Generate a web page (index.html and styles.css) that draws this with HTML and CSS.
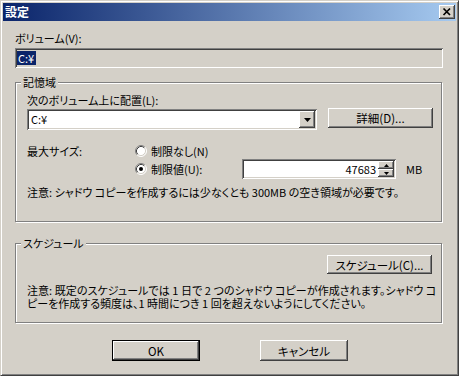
FILE: index.html
```html
<!DOCTYPE html>
<html lang="ja">
<head>
    <meta charset="UTF-8">
    <title>設定</title>
    <link rel="stylesheet" href="styles.css">
</head>
<body>

<div class="window">
    <div class="titlebar">
        <span class="title">設定</span>
        <button class="close raised" type="button">
            <svg width="16" height="14" viewBox="0 0 16 14">
                <path d="M4.5 3.5 L11 10 M11 3.5 L4.5 10" stroke="#000" stroke-width="1.7" fill="none"/>
            </svg>
        </button>
    </div>

    <div class="content">
        <div class="text volume-label">ボリューム(V):</div>
        <div class="field volume sunken"><span class="sel">C:¥</span></div>

        <!-- Storage area -->
        <div class="group storage">
            <span class="legend">記憶域</span>
            <div class="text">次のボリューム上に配置(L):</div>
            <div class="combo-row">
                <div class="combo sunken">
                    <span class="combo-value">C:¥</span>
                    <span class="drop raised">
                        <svg width="7" height="4" viewBox="0 0 7 4"><polygon points="0,0 7,0 3.5,4" fill="#000"/></svg>
                    </span>
                </div>
                <button class="btn raised details" type="button">詳細(D)...</button>
            </div>

            <div class="size">
                <div class="size-label">最大サイズ:</div>
                <div class="size-options">
                    <div class="radio-row">
                        <svg class="radio" width="12" height="12" viewBox="0 0 12 12">
                            <circle cx="6" cy="6" r="5" fill="#fff"/>
                            <path d="M2.11 9.89 A5.5 5.5 0 0 1 9.89 2.11" stroke="#808080" fill="none"/>
                            <path d="M9.89 2.11 A5.5 5.5 0 0 1 2.11 9.89" stroke="#fff" fill="none"/>
                            <path d="M2.82 9.18 A4.5 4.5 0 0 1 9.18 2.82" stroke="#404040" fill="none"/>
                            <path d="M9.18 2.82 A4.5 4.5 0 0 1 2.82 9.18" stroke="#d4d0c8" fill="none"/>
                        </svg>
                        <span>制限なし(N)</span>
                    </div>
                    <div class="radio-row limit">
                        <div class="radio-item">
                            <svg class="radio" width="12" height="12" viewBox="0 0 12 12">
                                <circle cx="6" cy="6" r="5" fill="#fff"/>
                                <path d="M2.11 9.89 A5.5 5.5 0 0 1 9.89 2.11" stroke="#808080" fill="none"/>
                                <path d="M9.89 2.11 A5.5 5.5 0 0 1 2.11 9.89" stroke="#fff" fill="none"/>
                                <path d="M2.82 9.18 A4.5 4.5 0 0 1 9.18 2.82" stroke="#404040" fill="none"/>
                                <path d="M9.18 2.82 A4.5 4.5 0 0 1 2.82 9.18" stroke="#d4d0c8" fill="none"/>
                                <circle cx="6" cy="6" r="2" fill="#000"/>
                            </svg>
                            <span>制限値(U):</span>
                        </div>
                        <div class="spin sunken">
                            <span class="spin-value">47683</span>
                            <div class="spin-buttons">
                                <span class="spin-btn raised">
                                    <svg width="5" height="3" viewBox="0 0 5 3"><polygon points="0,3 5,3 2.5,0" fill="#000"/></svg>
                                </span>
                                <span class="spin-btn raised">
                                    <svg width="5" height="3" viewBox="0 0 5 3"><polygon points="0,0 5,0 2.5,3" fill="#000"/></svg>
                                </span>
                            </div>
                        </div>
                        <span class="unit">MB</span>
                    </div>
                </div>
            </div>

            <div class="text note">注意: シャドウ コピーを作成するには少なくとも 300MB の空き領域が必要です。</div>
        </div>

        <!-- Schedule -->
        <div class="group schedule">
            <span class="legend">スケジュール</span>
            <div class="schedule-row">
                <button class="btn raised" type="button">スケジュール(C)...</button>
            </div>
            <div class="text note schedule-note">
                <div class="line-1">注意: 既定のスケジュールでは 1 日で 2 つのシャドウ コピーが作成されます。シャドウ コ</div>
                <div>ピーを作成する頻度は、1 時間につき 1 回を超えないようにしてください。</div>
            </div>
        </div>

        <div class="actions">
            <button class="btn raised default" type="button">OK</button>
            <button class="btn raised" type="button">キャンセル</button>
        </div>
    </div>
</div>

</body>
</html>
```

FILE: styles.css
```css
body {
    margin: 0;
    background-color: #d4d0c8;
    font-family: "Noto Sans CJK JP", sans-serif;
    font-size: 11px;
    color: #000;
}

/* 3D borders, Windows classic */
.raised {
    background-color: #d4d0c8;
    box-shadow: inset -1px -1px #404040, inset 1px 1px #fff, inset -2px -2px #808080, inset 2px 2px #d4d0c8;
}

.sunken {
    box-shadow: inset 1px 1px #808080, inset -1px -1px #fff, inset 2px 2px #404040, inset -2px -2px #d4d0c8;
}

.window {
    width: 459px;
    height: 376px;
    box-sizing: border-box;
    border: 1px solid;
    border-color: #d4d0c8 #404040 #404040 #d4d0c8;
    box-shadow: inset 1px 1px #fff, inset -1px -1px #808080;
    padding: 2px;
    display: flex;
    flex-direction: column;
}

.titlebar {
    height: 18px;
    flex-shrink: 0;
    background: linear-gradient(to right, #0a246a, #a6caf0);
    display: flex;
    align-items: center;
    justify-content: space-between;
    padding: 0 1px 0 2px;
    color: #fff;
    font-size: 12px;
    font-weight: bold;
    line-height: 14px;
}

.close {
    width: 16px;
    height: 14px;
    border: none;
    padding: 0;
    display: flex;
}

.content {
    padding: 0 13px 0 12px;
}

.text {
    line-height: 14px;
    white-space: nowrap;
    font-feature-settings: "palt";
}

.volume-label {
    margin-top: 10px;
}

.field {
    box-sizing: border-box;
    height: 20px;
    margin-top: 3px;
    padding: 2px 0 0 2px;
}

.sel {
    display: inline-block;
    background-color: #0a246a;
    color: #fff;
    height: 14px;
    line-height: 14px;
    padding: 0 2px 0 1px;
}

/* Group boxes */
.group {
    position: relative;
    box-sizing: border-box;
    border: 1px solid #808080;
    box-shadow: inset 1px 1px #fff, 1px 1px #fff;
    margin-right: 1px;
}

.legend {
    position: absolute;
    top: -8px;
    left: 5px;
    padding: 0 2px;
    background-color: #d4d0c8;
    line-height: 14px;
    font-feature-settings: "palt";
}

.storage {
    margin-top: 14px;
    height: 140px;
    padding: 10px 0 0 11px;
}

.combo-row {
    display: flex;
    align-items: flex-start;
    margin-top: 2px;
}

.combo {
    box-sizing: border-box;
    width: 290px;
    height: 21px;
    background-color: #fff;
    display: flex;
    justify-content: space-between;
    padding: 2px;
}

.combo-value {
    line-height: 17px;
    padding-left: 2px;
}

.drop {
    width: 16px;
    height: 17px;
    display: flex;
    align-items: center;
    justify-content: center;
}

.btn {
    box-sizing: border-box;
    border: none;
    height: 20px;
    padding: 0;
    font-family: inherit;
    font-size: 11.5px;
    color: #000;
    font-feature-settings: "palt";
}

.details {
    width: 105px;
    margin: -1px 0 0 11px;
}

.size {
    display: flex;
    margin-top: 14px;
}

.size-label {
    width: 108px;
    line-height: 14px;
    font-feature-settings: "palt";
}

.radio-row {
    display: flex;
    align-items: center;
    gap: 4px;
    height: 14px;
    line-height: 14px;
    font-feature-settings: "palt";
}

.radio-row.limit {
    height: 20px;
    margin-top: 1px;
    gap: 0;
}

.radio-item {
    width: 107px;
    display: flex;
    align-items: center;
    gap: 4px;
}

.spin {
    box-sizing: border-box;
    width: 154px;
    height: 20px;
    background-color: #fff;
    padding: 2px;
    display: flex;
}

.spin-value {
    flex: 1;
    text-align: right;
    padding-right: 2px;
    line-height: 16px;
}

.spin-buttons {
    width: 16px;
    display: flex;
    flex-direction: column;
}

.spin-btn {
    height: 8px;
    display: flex;
    align-items: center;
    justify-content: center;
}

.unit {
    margin-left: 10px;
}

.note {
    margin-top: 6px;
}

.schedule {
    margin-top: 21px;
    height: 80px;
    padding: 11px 9px 0 11px;
}

.schedule-row {
    display: flex;
    justify-content: flex-end;
}

.schedule-row .btn {
    width: 105px;
    height: 19px;
}

.schedule-note {
    margin-top: 10px;
    line-height: 13px;
}

.schedule-note .line-1 {
    letter-spacing: 0.06px;
}

.actions {
    display: flex;
    justify-content: center;
    gap: 60px;
    margin-top: 17px;
    padding-left: 2px;
}

.actions .btn {
    width: 88px;
    height: 21px;
}

.default {
    border: 1px solid #000;
}
```
